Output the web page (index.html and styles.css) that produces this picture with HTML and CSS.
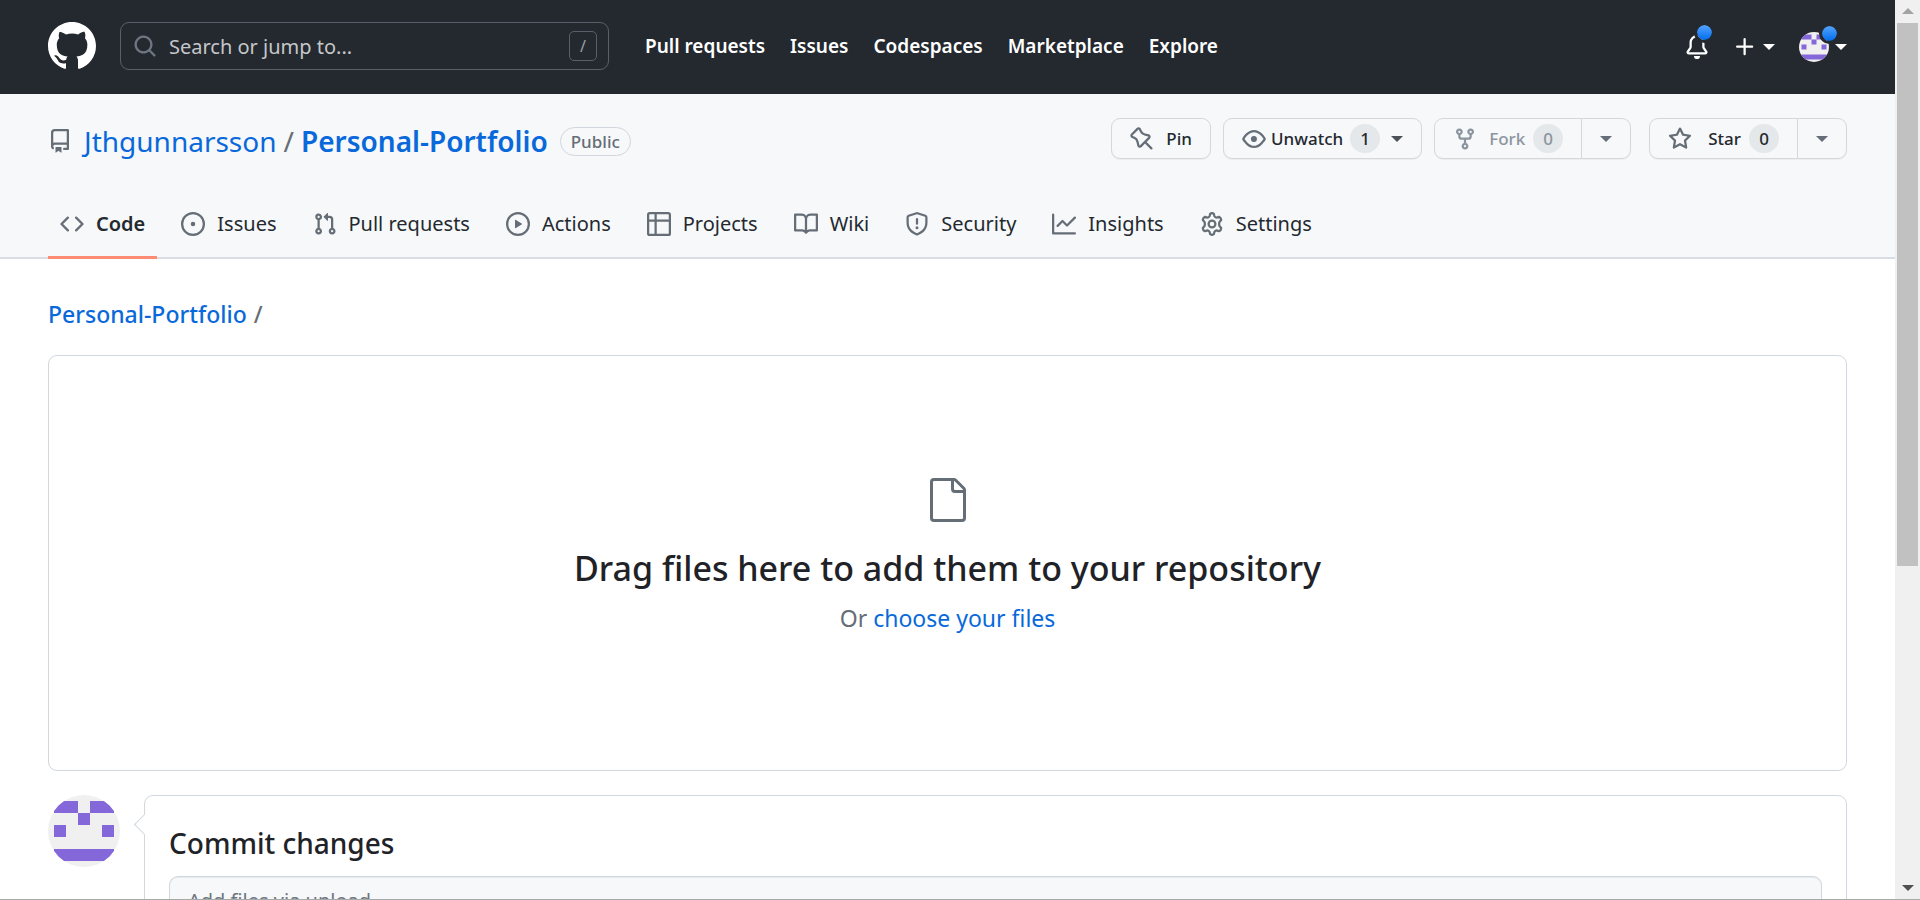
FILE: index.html
```html
<!DOCTYPE html>
<html lang="en">
<head>
<meta charset="utf-8">
<title>Upload files · Personal-Portfolio</title>
<link rel="stylesheet" href="styles.css">
</head>
<body>
<svg class="defs" aria-hidden="true">
  <defs>
    <symbol id="caret" viewBox="0 0 12 6"><path d="M0 0h12L6 6z"/></symbol>
    <symbol id="identicon" viewBox="0 0 12 12">
      <path fill="#f0f0f0" d="M0 0h12v12H0z"/>
      <path fill="#8467d9" d="M1 1h4v2H1zM7 1h4v2H7zM5 3h2v2H5zM1 5h2v2H1zM9 5h2v2H9zM1 9h10v2H1z"/>
    </symbol>
  </defs>
</svg>
<div class="shell">
  <div class="page">
    <header class="topbar">
      <a class="logo" href="#" aria-label="Homepage"><svg class="icon-logo" viewBox="0 0 16 16"><path d="M8 0C3.58 0 0 3.58 0 8c0 3.54 2.29 6.53 5.47 7.59.4.07.55-.17.55-.38 0-.19-.01-.82-.01-1.49-2.01.37-2.53-.49-2.69-.94-.09-.23-.48-.94-.82-1.13-.28-.15-.68-.52-.01-.53.63-.01 1.08.58 1.23.82.72 1.21 1.87.87 2.33.66.07-.52.28-.87.51-1.07-1.78-.2-3.64-.89-3.64-3.95 0-.87.31-1.59.82-2.15-.08-.2-.36-1.02.08-2.12 0 0 .67-.21 2.2.82.64-.18 1.32-.27 2-.27.68 0 1.36.09 2 .27 1.53-1.04 2.2-.82 2.2-.82.44 1.1.16 1.92.08 2.12.51.56.82 1.27.82 2.15 0 3.07-1.87 3.75-3.65 3.95.29.25.54.73.54 1.48 0 1.07-.01 1.93-.01 2.2 0 .21.15.46.55.38A8.013 8.013 0 0016 8c0-4.42-3.58-8-8-8z"/></svg></a>
      <label class="search">
        <svg class="icon" viewBox="0 0 16 16"><path d="M10.68 11.74a6 6 0 1 1 1.06-1.06l3.04 3.04a.75.75 0 1 1-1.06 1.06zM11.5 7a4.5 4.5 0 1 0-9 0 4.5 4.5 0 0 0 9 0z"/></svg>
        <input class="search-input" type="text" placeholder="Search or jump to..." aria-label="Search or jump to">
        <kbd class="key">/</kbd>
      </label>
      <nav class="topnav" aria-label="Global">
        <a href="#">Pull requests</a>
        <a href="#">Issues</a>
        <a href="#">Codespaces</a>
        <a href="#">Marketplace</a>
        <a href="#">Explore</a>
      </nav>
      <div class="tools">
        <button class="tool" type="button" aria-label="Notifications"><svg class="icon" viewBox="0 0 16 16"><path d="M8 16a2 2 0 0 0 1.985-1.75c.017-.137-.097-.25-.235-.25h-3.5c-.138 0-.252.113-.235.25A2 2 0 0 0 8 16ZM3 5a5 5 0 0 1 10 0v2.947c0 .05.015.098.042.139l1.703 2.555A1.519 1.519 0 0 1 13.482 13H2.518a1.516 1.516 0 0 1-1.263-2.36l1.703-2.554A.255.255 0 0 0 3 7.947Zm5-3.5A3.5 3.5 0 0 0 4.5 5v2.947c0 .346-.102.683-.294.97l-1.703 2.556a.017.017 0 0 0-.003.01l.001.006.004.006.006.004.007.001h10.964l.007-.001.006-.004.004-.006.001-.007a.017.017 0 0 0-.003-.01l-1.703-2.554a1.745 1.745 0 0 1-.294-.97V5A3.5 3.5 0 0 0 8 1.5Z"/></svg><span class="dot"></span></button>
        <button class="tool tool-add" type="button" aria-label="Create new"><svg class="icon" viewBox="0 0 16 16"><path d="M7.75 2a.75.75 0 0 1 .75.75V7h4.25a.75.75 0 0 1 0 1.5H8.5v4.25a.75.75 0 0 1-1.5 0V8.5H2.75a.75.75 0 0 1 0-1.5H7V2.75A.75.75 0 0 1 7.75 2Z"/></svg><svg class="caret"><use href="#caret"/></svg></button>
        <button class="tool tool-user" type="button" aria-label="Account menu"><svg class="avatar-small"><use href="#identicon"/></svg><svg class="caret"><use href="#caret"/></svg><span class="dot dot-user"></span></button>
      </div>
    </header>

    <section class="repo">
      <div class="repo-head">
        <h1 class="repo-title">
          <svg class="icon" viewBox="0 0 16 16"><path d="M2 2.5A2.5 2.5 0 0 1 4.5 0h8.75a.75.75 0 0 1 .75.75v12.5a.75.75 0 0 1-.75.75h-2.5a.75.75 0 0 1 0-1.5h1.75v-2h-8a1 1 0 0 0-.714 1.7.75.75 0 1 1-1.072 1.05A2.495 2.495 0 0 1 2 11.5Zm10.5-1h-8a1 1 0 0 0-1 1v6.708A2.486 2.486 0 0 1 4.5 9h8ZM5 12.25a.25.25 0 0 1 .25-.25h3.5a.25.25 0 0 1 .25.25v3.25a.25.25 0 0 1-.4.2l-1.45-1.087a.249.249 0 0 0-.3 0L5.4 15.7a.25.25 0 0 1-.4-.2Z"/></svg>
          <a class="owner" href="#">Jthgunnarsson</a><span class="slash">/</span><a class="strong" href="#">Personal-Portfolio</a>
          <span class="badge">Public</span>
        </h1>
        <div class="actions">
          <button class="btn" type="button"><svg class="icon" viewBox="0 0 16 16"><path d="M4.456.734a1.75 1.75 0 0 1 2.826.504l.613 1.327a3.081 3.081 0 0 0 2.084 1.707l2.454.584c1.332.317 1.8 1.972.832 2.94L11.06 10l3.72 3.72a.75.75 0 1 1-1.061 1.06L10 11.06l-2.204 2.205c-.968.968-2.623.5-2.94-.832l-.584-2.454a3.081 3.081 0 0 0-1.707-2.084l-1.327-.613a1.75 1.75 0 0 1-.504-2.826L4.456.734ZM5.92 1.866a.25.25 0 0 0-.404-.072L1.794 5.516a.25.25 0 0 0 .072.404l1.328.613A4.582 4.582 0 0 1 5.73 9.63l.584 2.454a.25.25 0 0 0 .42.12l5.47-5.47a.25.25 0 0 0-.12-.42L9.63 5.73a4.581 4.581 0 0 1-3.098-2.537L5.92 1.866Z"/></svg>Pin</button>
          <button class="btn btn-watch" type="button"><svg class="icon" viewBox="0 0 16 16"><path d="M8 2c1.981 0 3.671.992 4.933 2.078 1.27 1.091 2.187 2.345 2.637 3.023a1.62 1.62 0 0 1 0 1.798c-.45.678-1.367 1.932-2.637 3.023C11.67 13.008 9.981 14 8 14c-1.981 0-3.671-.992-4.933-2.078C1.797 10.83.88 9.576.43 8.898a1.62 1.62 0 0 1 0-1.798c.45-.677 1.367-1.931 2.637-3.022C4.33 2.992 6.019 2 8 2ZM1.679 7.932a.12.12 0 0 0 0 .136c.411.622 1.241 1.75 2.366 2.717C5.176 11.758 6.527 12.5 8 12.5c1.473 0 2.825-.742 3.955-1.715 1.124-.967 1.954-2.096 2.366-2.717a.12.12 0 0 0 0-.136c-.412-.621-1.242-1.75-2.366-2.717C10.824 4.242 9.473 3.5 8 3.5c-1.473 0-2.825.742-3.955 1.715-1.124.967-1.954 2.096-2.366 2.717ZM8 10a2 2 0 1 1-.001-3.999A2 2 0 0 1 8 10Z"/></svg>Unwatch<span class="count">1</span><svg class="caret"><use href="#caret"/></svg></button>
          <div class="group">
            <button class="btn" type="button" disabled><svg class="icon" viewBox="0 0 16 16"><path d="M5 5.372v.878c0 .414.336.75.75.75h4.5a.75.75 0 0 0 .75-.75v-.878a2.25 2.25 0 1 1 1.5 0v.878a2.25 2.25 0 0 1-2.25 2.25h-1.5v2.128a2.251 2.251 0 1 1-1.5 0V8.5h-1.5A2.25 2.25 0 0 1 3.5 6.25v-.878a2.25 2.25 0 1 1 1.5 0ZM5 3.25a.75.75 0 1 0-1.5 0 .75.75 0 0 0 1.5 0Zm6.75.75a.75.75 0 1 0 0-1.5.75.75 0 0 0 0 1.5Zm-3 8.75a.75.75 0 1 0-1.5 0 .75.75 0 0 0 1.5 0Z"/></svg>Fork<span class="count">0</span></button>
            <button class="btn btn-drop" type="button" aria-label="See your forks"><svg class="caret"><use href="#caret"/></svg></button>
          </div>
          <div class="group group-star">
            <button class="btn" type="button"><svg class="icon" viewBox="0 0 16 16"><path d="M8 .25a.75.75 0 0 1 .673.418l1.882 3.815 4.21.612a.75.75 0 0 1 .416 1.279l-3.046 2.97.719 4.192a.751.751 0 0 1-1.088.791L8 12.347l-3.766 1.98a.75.75 0 0 1-1.088-.79l.72-4.194L.818 6.374a.75.75 0 0 1 .416-1.28l4.21-.611L7.327.668A.75.75 0 0 1 8 .25Zm0 2.445L6.615 5.5a.75.75 0 0 1-.564.41l-3.097.45 2.24 2.184a.75.75 0 0 1 .216.664l-.528 3.084 2.769-1.456a.75.75 0 0 1 .698 0l2.77 1.456-.53-3.084a.75.75 0 0 1 .216-.664l2.24-2.183-3.096-.45a.75.75 0 0 1-.564-.41L8 2.694Z"/></svg><span class="star-label">Star</span><span class="count">0</span></button>
            <button class="btn btn-drop" type="button" aria-label="Add to a list"><svg class="caret"><use href="#caret"/></svg></button>
          </div>
        </div>
      </div>
      <nav class="tabs" aria-label="Repository">
        <a class="tab current" href="#" aria-current="page"><svg class="icon" viewBox="0 0 16 16"><path d="m11.28 3.22 4.25 4.25a.75.75 0 0 1 0 1.06l-4.25 4.25a.749.749 0 0 1-1.275-.326.749.749 0 0 1 .215-.734L13.94 8l-3.72-3.72a.749.749 0 0 1 .326-1.275.749.749 0 0 1 .734.215Zm-6.56 0a.751.751 0 0 1 1.042.018.751.751 0 0 1 .018 1.042L2.06 8l3.72 3.72a.749.749 0 0 1-.326 1.275.749.749 0 0 1-.734-.215L.47 8.53a.75.75 0 0 1 0-1.06Z"/></svg>Code</a>
        <a class="tab" href="#"><svg class="icon" viewBox="0 0 16 16"><path d="M8 9.5a1.5 1.5 0 1 0 0-3 1.5 1.5 0 0 0 0 3Z"/><path d="M8 0a8 8 0 1 1 0 16A8 8 0 0 1 8 0ZM1.5 8a6.5 6.5 0 1 0 13 0 6.5 6.5 0 0 0-13 0Z"/></svg>Issues</a>
        <a class="tab" href="#"><svg class="icon" viewBox="0 0 16 16"><path d="M1.5 3.25a2.25 2.25 0 1 1 3 2.122v5.256a2.251 2.251 0 1 1-1.5 0V5.372A2.25 2.25 0 0 1 1.5 3.25Zm5.677-.177L9.573.677A.25.25 0 0 1 10 .854V2.5h1A2.5 2.5 0 0 1 13.5 5v5.628a2.251 2.251 0 1 1-1.5 0V5a1 1 0 0 0-1-1h-1v1.646a.25.25 0 0 1-.427.177L7.177 3.427a.25.25 0 0 1 0-.354ZM3.75 2.5a.75.75 0 1 0 0 1.5.75.75 0 0 0 0-1.5Zm0 9.5a.75.75 0 1 0 0 1.5.75.75 0 0 0 0-1.5Zm8.25.75a.75.75 0 1 0 1.5 0 .75.75 0 0 0-1.5 0Z"/></svg>Pull requests</a>
        <a class="tab" href="#"><svg class="icon" viewBox="0 0 16 16"><path d="M8 0a8 8 0 1 1 0 16A8 8 0 0 1 8 0ZM1.5 8a6.5 6.5 0 1 0 13 0 6.5 6.5 0 0 0-13 0Zm4.879-2.773 4.264 2.559a.25.25 0 0 1 0 .428l-4.264 2.559A.25.25 0 0 1 6 10.559V5.442a.25.25 0 0 1 .379-.215Z"/></svg>Actions</a>
        <a class="tab" href="#"><svg class="icon" viewBox="0 0 16 16"><path d="M0 1.75C0 .784.784 0 1.75 0h12.5C15.216 0 16 .784 16 1.75v12.5A1.75 1.75 0 0 1 14.25 16H1.75A1.75 1.75 0 0 1 0 14.25ZM6.5 6.5v8h7.75a.25.25 0 0 0 .25-.25V6.5Zm8-1.5V1.75a.25.25 0 0 0-.25-.25H6.5V5Zm-13 1.5v7.75c0 .138.112.25.25.25H5v-8ZM5 5V1.5H1.75a.25.25 0 0 0-.25.25V5Z"/></svg>Projects</a>
        <a class="tab" href="#"><svg class="icon" viewBox="0 0 16 16"><path d="M0 1.75A.75.75 0 0 1 .75 1h4.253c1.227 0 2.317.59 3 1.501A3.743 3.743 0 0 1 11.006 1h4.245a.75.75 0 0 1 .75.75v10.5a.75.75 0 0 1-.75.75h-4.507a2.25 2.25 0 0 0-1.591.659l-.622.621a.75.75 0 0 1-1.06 0l-.622-.621A2.25 2.25 0 0 0 5.258 13H.75a.75.75 0 0 1-.75-.75Zm7.251 10.324.004-5.073-.002-2.253A2.25 2.25 0 0 0 5.003 2.5H1.5v9h3.757a3.75 3.75 0 0 1 1.994.574ZM8.755 4.75l-.004 7.322a3.752 3.752 0 0 1 1.992-.572H14.5v-9h-3.495a2.25 2.25 0 0 0-2.25 2.25Z"/></svg>Wiki</a>
        <a class="tab" href="#"><svg class="icon" viewBox="0 0 16 16"><path d="M7.467.133a1.748 1.748 0 0 1 1.066 0l5.25 1.68A1.75 1.75 0 0 1 15 3.48V7c0 1.566-.32 3.182-1.303 4.682-.983 1.498-2.585 2.813-5.032 3.855a1.697 1.697 0 0 1-1.33 0c-2.447-1.042-4.049-2.357-5.032-3.855C1.32 10.182 1 8.566 1 7V3.48a1.75 1.75 0 0 1 1.217-1.667Zm.61 1.429a.25.25 0 0 0-.153 0l-5.25 1.68a.25.25 0 0 0-.174.238V7c0 1.358.275 2.666 1.057 3.86.784 1.194 2.121 2.34 4.366 3.297a.196.196 0 0 0 .154 0c2.245-.956 3.582-2.104 4.366-3.298C13.225 9.666 13.5 8.36 13.5 7V3.48a.251.251 0 0 0-.174-.237l-5.25-1.68ZM8.75 4.75v3a.75.75 0 0 1-1.5 0v-3a.75.75 0 0 1 1.5 0ZM9 10.5a1 1 0 1 1-2 0 1 1 0 0 1 2 0Z"/></svg>Security</a>
        <a class="tab" href="#"><svg class="icon" viewBox="0 0 16 16"><path d="M1.5 1.75V13.5h13.75a.75.75 0 0 1 0 1.5H.75a.75.75 0 0 1-.75-.75V1.75a.75.75 0 0 1 1.5 0Zm14.28 2.53-5.25 5.25a.75.75 0 0 1-1.06 0L7 7.06 4.28 9.78a.751.751 0 0 1-1.042-.018.751.751 0 0 1-.018-1.042l3.25-3.25a.75.75 0 0 1 1.06 0L10 7.94l4.72-4.72a.751.751 0 0 1 1.042.018.751.751 0 0 1 .018 1.042Z"/></svg>Insights</a>
        <a class="tab" href="#"><svg class="icon icon-gear" viewBox="0 0 16 16"><path d="M6.8 1.2Q8 .3 9.2 1.2L9.6 2.7Q9.8 3.2 10.7 3.7Q11.2 3.9 12.7 3.2Q14.2 3.9 14.1 5.4L13 6.6Q12.5 8 13 9.4L14.1 10.6Q14.2 12.1 12.7 12.8Q11.2 12.1 10.7 12.3Q9.8 12.8 9.6 13.3L9.2 14.8Q8 15.7 6.8 14.8L6.4 13.3Q6.2 12.8 5.3 12.3Q4.8 12.1 3.3 12.8Q1.8 12.1 1.9 10.6L3 9.4Q3.5 8 3 6.6L1.9 5.4Q1.8 3.9 3.3 3.2Q4.8 3.9 5.3 3.7Q6.2 3.2 6.4 2.7Z"/><circle cx="8" cy="8" r="2.25"/></svg>Settings</a>
      </nav>
    </section>

    <main class="content">
      <div class="crumbs"><a href="#">Personal-Portfolio</a><span>/</span></div>
      <section class="dropzone">
        <svg class="icon-file" viewBox="0 0 24 24"><path d="M3 3a2 2 0 0 1 2-2h9.982a2 2 0 0 1 1.414.586l4.018 4.018A2 2 0 0 1 21 7.018V21a2 2 0 0 1-2 2H5a2 2 0 0 1-2-2Zm2-.5a.5.5 0 0 0-.5.5v18a.5.5 0 0 0 .5.5h14a.5.5 0 0 0 .5-.5V8.5h-4a2 2 0 0 1-2-2v-4Zm10 0v4a.5.5 0 0 0 .5.5h4a.5.5 0 0 0-.146-.336l-4.018-4.018A.5.5 0 0 0 15 2.5Z"/></svg>
        <h2 class="drop-title">Drag files here to add them to your repository</h2>
        <p class="drop-hint">Or <a href="#">choose your files</a></p>
      </section>
      <div class="commit">
        <svg class="avatar"><use href="#identicon"/></svg>
        <form class="commit-box">
          <h2 class="commit-title"><label for="summary">Commit changes</label></h2>
          <input class="commit-input" id="summary" type="text" placeholder="Add files via upload">
        </form>
      </div>
    </main>
  </div>
  <div class="scrollbar" aria-hidden="true">
    <svg class="arrow arrow-up"><use href="#caret"/></svg>
    <div class="track"><div class="thumb"></div></div>
    <svg class="arrow"><use href="#caret"/></svg>
  </div>
</div>
</body>
</html>
```
FILE: styles.css
```css
* { box-sizing: border-box; }

body {
  margin: 0;
  font: 20px/30px "Noto Sans", "Open Sans", sans-serif;
  color: #1f2328;
  background: #fff;
}

a { color: #0969da; text-decoration: none; }
h1, h2, p { margin: 0; }
button, input { font: inherit; color: inherit; }
svg { display: block; flex: none; fill: currentColor; }

.defs { position: absolute; width: 0; height: 0; }
.icon { width: 24px; height: 24px; }
.caret { width: 12px; height: 6px; }
.strong { font-weight: 600; }

.shell {
  display: flex;
  height: 100vh;
  overflow: hidden;
  border-bottom: 1px solid #a9a9a9;
}
.page { flex: 1; min-width: 0; overflow: hidden; }

/* Global header */
.topbar {
  display: flex;
  align-items: center;
  gap: 24px;
  padding: 22px 48px 24px;
  background: #24292f;
  color: #fff;
}
.logo { color: #fff; }
.icon-logo { width: 48px; height: 48px; }
.search {
  display: flex;
  align-items: center;
  gap: 12px;
  width: 489px;
  height: 48px;
  padding: 0 11px 0 12px;
  border: 1px solid #57606a;
  border-radius: 9px;
  color: #6e7681;
}
.search-input {
  flex: 1;
  min-width: 0;
  padding: 2px 0 0;
  border: 0;
  outline: 0;
  background: none;
}
.search-input::placeholder { color: #c4c7ca; opacity: 1; }
.key {
  width: 28px;
  height: 30px;
  border: 1px solid #57606a;
  border-radius: 5px;
  font: 16px/28px "Noto Sans", sans-serif;
  text-align: center;
  color: #9a9fa5;
}
.topnav {
  display: flex;
  gap: 25px;
  margin-left: 12px;
  font-size: 19px;
  font-weight: 600;
}
.topnav a { color: #fff; }
.tools {
  display: flex;
  align-items: center;
  gap: 24px;
  margin-left: auto;
  padding-top: 2px;
}
.tool {
  position: relative;
  display: flex;
  align-items: center;
  padding: 0;
  border: 0;
  background: none;
}
.tool-add { gap: 6px; }
.tool-user { gap: 6px; }
.avatar-small { width: 30px; height: 30px; border-radius: 50%; }
.dot {
  position: absolute;
  top: -13px;
  right: -6px;
  width: 21px;
  height: 21px;
  border: 3px solid #24292f;
  border-radius: 50%;
  background: linear-gradient(#54a3ff, #006eed) padding-box;
}
.dot-user { top: -9px; right: 7px; }

/* Repository header */
.repo {
  padding: 24px 48px 0;
  background: #f6f8fa;
  border-bottom: 2px solid #d8dee4;
}
.repo-head { display: flex; justify-content: space-between; }
.repo-title {
  display: flex;
  align-items: center;
  gap: 7px;
  height: 46px;
  font-size: 28px;
  font-weight: 400;
  color: #656d76;
}
.owner { margin-left: 5px; }
.slash { color: #656d76; }
.badge {
  margin-left: 5px;
  padding: 0 10px;
  border: 1px solid #d0d7de;
  border-radius: 15px;
  font-size: 17px;
  font-weight: 500;
  line-height: 27px;
}
.actions { display: flex; gap: 12px; }
.btn {
  display: flex;
  align-items: center;
  gap: 12px;
  height: 41px;
  padding: 0 18px;
  border: 1px solid #d5d8da;
  border-radius: 9px;
  background: #f6f8fa;
  box-shadow: 0 1px 0 #eceef0;
  font-size: 17px;
  font-weight: 500;
  color: #24292f;
}
.btn .icon, .btn-drop .caret { color: #656d76; }
.btn:disabled, .btn:disabled .icon { color: #8c959f; }
.btn-watch { gap: 5px; }
.btn-watch .caret { margin-left: 6px; color: #4b5157; }
.count {
  min-width: 30px;
  border-radius: 15px;
  background: #e4e8ea;
  line-height: 29px;
  text-align: center;
}
.btn .count { margin-left: -4px; }
.btn-watch .count { margin-left: 2px; }
.group { display: flex; }
.group-star { margin-left: 6px; }
.group .btn:first-child { border-radius: 9px 0 0 9px; }
.group .btn-drop { border-left: 0; border-radius: 0 9px 9px 0; }
.star-label { margin-left: 4px; }

.tabs { display: flex; gap: 12px; margin-top: 24px; }
.tab {
  display: flex;
  align-items: center;
  gap: 12px;
  height: 71px;
  padding: 3px 12px 0;
  margin-bottom: -2px;
  border-bottom: 3px solid transparent;
  color: #24292f;
}
.tab .icon { color: #656d76; }
.tab.current { border-color: #fd8c73; font-weight: 600; }
.icon-gear { fill: none; stroke: currentColor; stroke-width: 1.5; stroke-linejoin: round; }

/* Upload area */
.content { padding: 37px 48px 0; }
.crumbs {
  display: flex;
  gap: 7px;
  font-size: 23px;
  font-weight: 500;
  line-height: 36px;
  color: #656d76;
}
.dropzone {
  display: flex;
  flex-direction: column;
  align-items: center;
  margin-top: 23px;
  padding: 120px 24px 134px;
  border: 1px solid #d0d7de;
  border-radius: 9px;
  color: #656d76;
}
.icon-file { width: 48px; height: 48px; }
.drop-title {
  margin-top: 17px;
  font-size: 34px;
  font-weight: 500;
  line-height: 54px;
  color: #1f2328;
}
.drop-hint { margin-top: 5px; font-size: 23px; line-height: 36px; }

/* Commit form */
.commit { display: flex; gap: 24px; margin-top: 24px; }
.avatar { width: 72px; height: 72px; border-radius: 50%; }
.commit-box {
  position: relative;
  flex: 1;
  padding: 24px;
  border: 1px solid #d0d7de;
  border-radius: 9px;
}
.commit-box::before {
  content: "";
  position: absolute;
  top: 21px;
  left: -8px;
  width: 14px;
  height: 14px;
  background: #fff;
  border: solid #d0d7de;
  border-width: 0 0 1px 1px;
  transform: rotate(45deg);
}
.commit-title { font-size: 28px; font-weight: 500; line-height: 47px; }
.commit-input {
  display: block;
  width: 100%;
  height: 48px;
  margin-top: 9px;
  padding: 0 18px;
  border: 1px solid #d0d7de;
  border-radius: 9px;
  background: #f6f8fa;
  box-shadow: inset 0 1px 0 #e6eaee;
}
.commit-input::placeholder { color: #6e7781; opacity: 1; }

/* Window scrollbar */
.scrollbar {
  display: flex;
  flex-direction: column;
  align-items: center;
  gap: 9px;
  width: 25px;
  padding: 8px 0;
  background: #f0f0f0;
}
.arrow { width: 12px; height: 6px; color: #505050; }
.arrow-up { color: #a3a3a3; transform: rotate(180deg); }
.track { flex: 1; display: grid; grid-template-rows: 7fr 4fr; width: 21px; }
.thumb { background: #c1c1c1; }
```
